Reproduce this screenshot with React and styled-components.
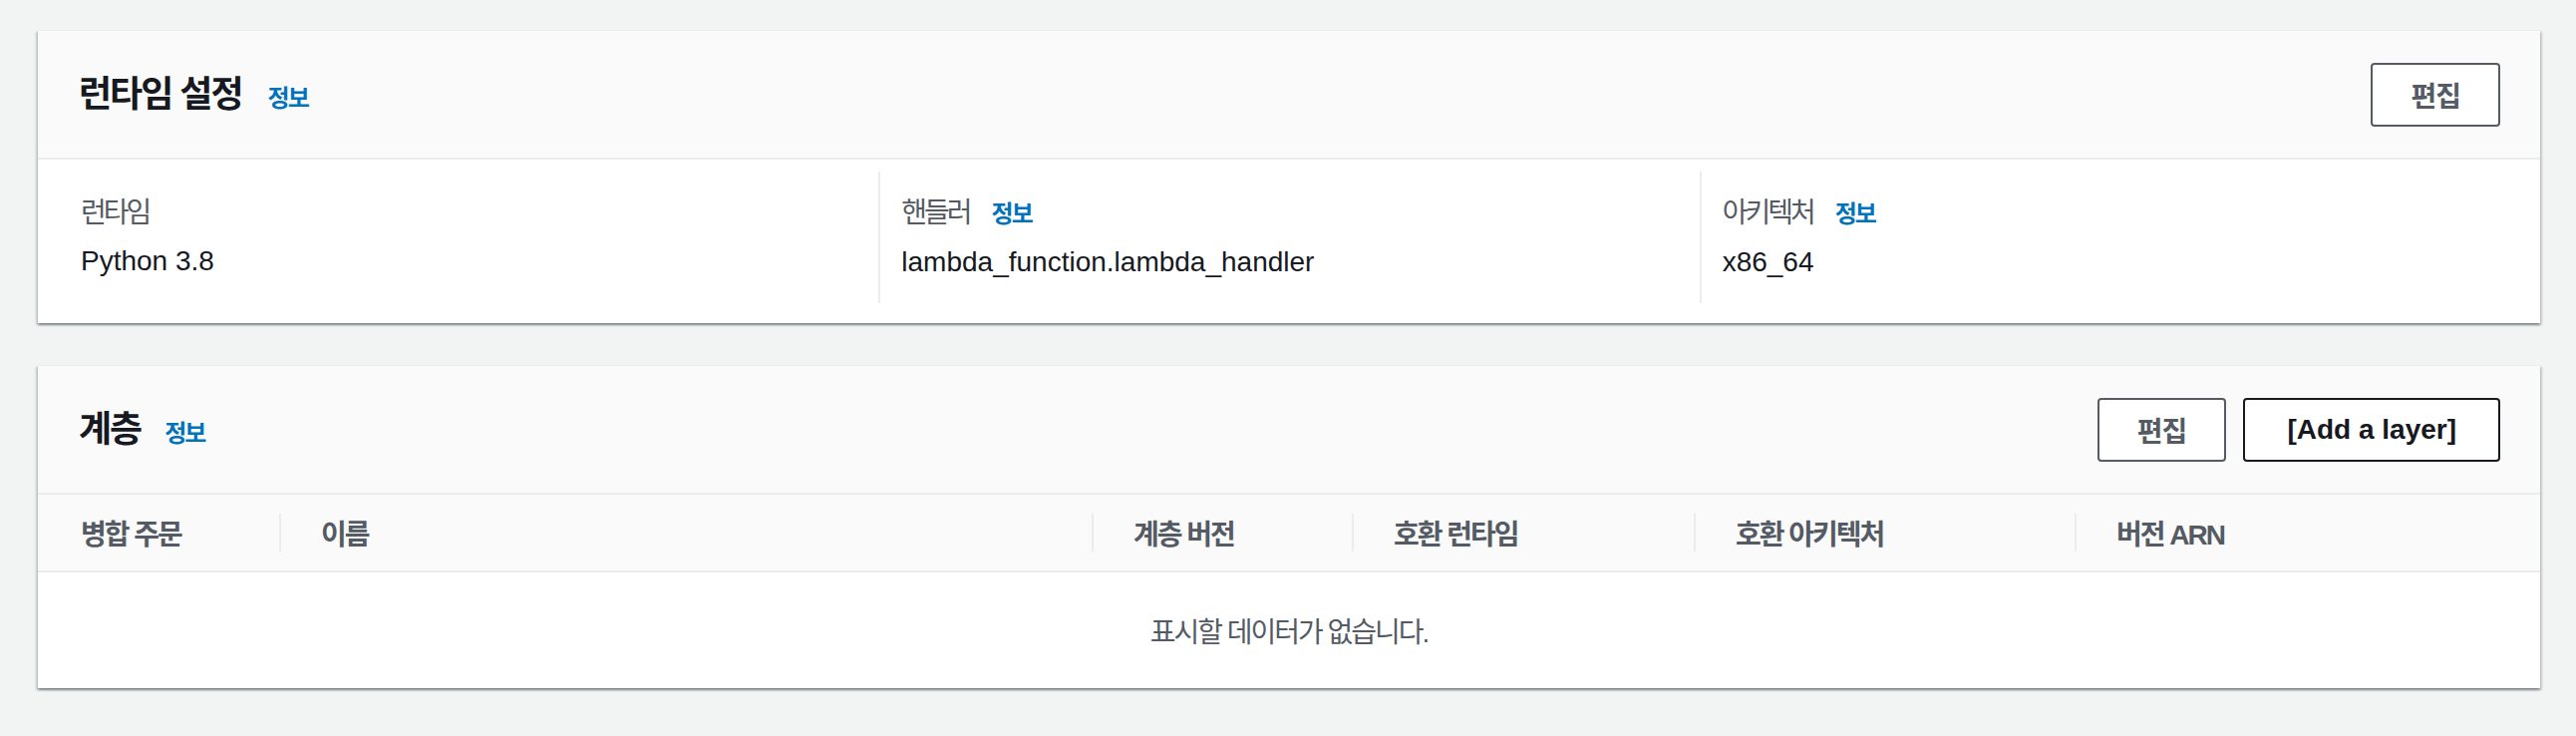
import React from "react";
import styled, { createGlobalStyle } from "styled-components";

const GlobalStyle = createGlobalStyle`
  html, body {
    margin: 0;
    padding: 0;
    background: #f2f3f3;
  }
  body {
    font-family: "Liberation Sans", "Noto Sans CJK KR", sans-serif;
    color: #16191f;
  }
`;

const Page = styled.div`
  padding: 30px 36px 40px 38px;
  display: flex;
  flex-direction: column;
  gap: 42px;
`;

const Card = styled.section`
  background: #ffffff;
  border-top: 1px solid #eaeded;
  box-shadow: 0 2px 2px 0 rgba(0, 28, 36, 0.3),
    2px 2px 2px 0 rgba(0, 28, 36, 0.15),
    -2px 2px 2px 0 rgba(0, 28, 36, 0.15);
`;

const CardHeader = styled.header`
  height: 127px;
  background: #fafafa;
  border-bottom: 2px solid #eaeded;
  display: flex;
  align-items: center;
  justify-content: space-between;
  padding: 0 40px 0 41px;
`;

const TitleGroup = styled.div`
  display: flex;
  align-items: baseline;
`;

const Title = styled.h2`
  margin: 0;
  font-size: 36px;
  line-height: 44px;
  font-weight: 700;
  letter-spacing: -2px;
  color: #16191f;
`;

const InfoLink = styled.a`
  margin-left: ${(p) => p.$gap || 26}px;
  font-size: 24px;
  font-weight: 700;
  letter-spacing: -2px;
  color: #0073bb;
  text-decoration: none;
  cursor: pointer;
`;

const Actions = styled.div`
  display: flex;
  gap: 17px;
`;

const Button = styled.button`
  height: 64px;
  padding: 0 ${(p) => (p.$wide ? 42 : 38)}px;
  background: #ffffff;
  border: 2px solid ${(p) => (p.$dark ? "#16191f" : "#545b64")};
  border-radius: 4px;
  font-family: inherit;
  font-size: 28px;
  font-weight: 700;
  letter-spacing: ${(p) => (p.$wide ? 0 : -1)}px;
  color: ${(p) => (p.$dark ? "#16191f" : "#545b64")};
  cursor: pointer;
`;

const Columns = styled.div`
  display: grid;
  grid-template-columns: repeat(3, 1fr);
  padding: 12px 20px 20px;
`;

const Column = styled.div`
  padding: 22px 21px 21px;
  border-left: 2px solid ${(p) => (p.$first ? "transparent" : "#eaeded")};
  display: flex;
  flex-direction: column;
  gap: 8px;
`;

const Label = styled.div`
  display: flex;
  align-items: baseline;
  font-size: 28px;
  line-height: 40px;
  letter-spacing: -3px;
  color: #545b64;
`;

const Value = styled.div`
  font-size: 28px;
  line-height: 40px;
  color: #16191f;
`;

const TableHead = styled.div`
  display: grid;
  grid-template-columns: 242px 815px 261px 343px 382px 1fr;
  background: #fafafa;
  border-bottom: 2px solid #eaeded;
  padding: 19px 0;
`;

const HeadCell = styled.div`
  height: 38px;
  display: flex;
  align-items: center;
  padding-left: ${(p) => (p.$first ? 41 : 40)}px;
  border-left: 2px solid ${(p) => (p.$first ? "transparent" : "#eaeded")};
  font-size: 28px;
  font-weight: 700;
  letter-spacing: -2px;
  color: #545b64;
  white-space: nowrap;
`;

const Empty = styled.div`
  height: 116px;
  display: flex;
  align-items: center;
  justify-content: center;
  font-size: 28px;
  letter-spacing: -2px;
  color: #545b64;
`;

const runtime = [
  { label: "런타임", value: "Python 3.8" },
  { label: "핸들러", value: "lambda_function.lambda_handler", info: true },
  { label: "아키텍처", value: "x86_64", info: true },
];

const headers = ["병합 주문", "이름", "계층 버전", "호환 런타임", "호환 아키텍처", "버전 ARN"];

export default function App() {
  return (
    <>
      <GlobalStyle />
      <Page>
        <Card>
          <CardHeader>
            <TitleGroup>
              <Title>런타임 설정</Title>
              <InfoLink>정보</InfoLink>
            </TitleGroup>
            <Actions>
              <Button>편집</Button>
            </Actions>
          </CardHeader>
          <Columns>
            {runtime.map((item, i) => (
              <Column key={item.label} $first={i === 0}>
                <Label>
                  {item.label}
                  {item.info && <InfoLink $gap={22}>정보</InfoLink>}
                </Label>
                <Value>{item.value}</Value>
              </Column>
            ))}
          </Columns>
        </Card>

        <Card>
          <CardHeader>
            <TitleGroup>
              <Title>계층</Title>
              <InfoLink $gap={24}>정보</InfoLink>
            </TitleGroup>
            <Actions>
              <Button>편집</Button>
              <Button $dark $wide>[Add a layer]</Button>
            </Actions>
          </CardHeader>
          <TableHead>
            {headers.map((h, i) => (
              <HeadCell key={h} $first={i === 0}>
                {h}
              </HeadCell>
            ))}
          </TableHead>
          <Empty>표시할 데이터가 없습니다.</Empty>
        </Card>
      </Page>
    </>
  );
}
